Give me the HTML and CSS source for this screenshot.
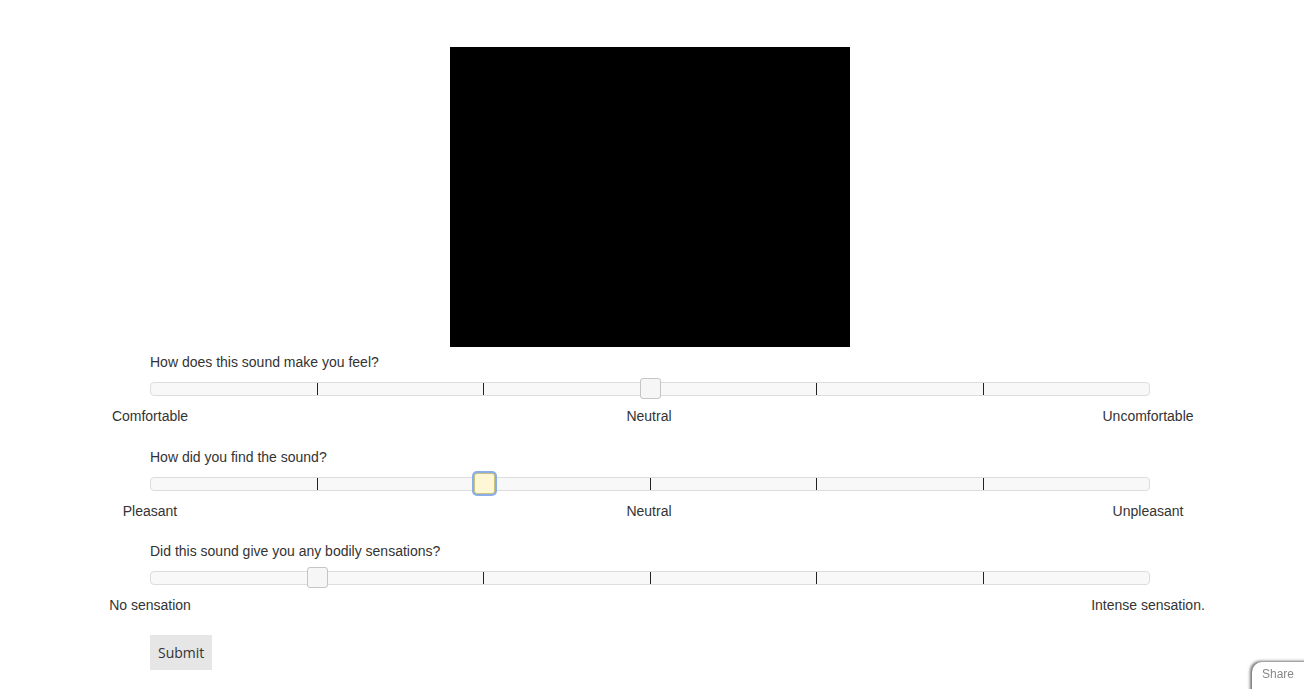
FILE: index.html
```html
<!DOCTYPE html>
<html>
<head>
<meta charset="utf-8">
<link rel="stylesheet" href="styles.css">
</head>
<body>
<div class="wrap">
  <div class="video"></div>

  <div class="q">
    <div class="question">How does this sound make you feel?</div>
    <div class="track">
      <span class="seg"></span><span class="seg"></span><span class="seg"></span><span class="seg"></span><span class="seg"></span><span class="seg"></span>
      <span class="handle" style="left:50%"></span>
    </div>
    <div class="labels">
      <span class="lbl"><span>Comfortable</span></span>
      <span class="lbl"><span>Neutral</span></span>
      <span class="lbl"><span>Uncomfortable</span></span>
    </div>
  </div>

  <div class="q">
    <div class="question">How did you find the sound?</div>
    <div class="track">
      <span class="seg"></span><span class="seg"></span><span class="seg"></span><span class="seg"></span><span class="seg"></span><span class="seg"></span>
      <span class="handle focus" style="left:33.333%"></span>
    </div>
    <div class="labels">
      <span class="lbl"><span>Pleasant</span></span>
      <span class="lbl"><span>Neutral</span></span>
      <span class="lbl"><span>Unpleasant</span></span>
    </div>
  </div>

  <div class="q">
    <div class="question">Did this sound give you any bodily sensations?</div>
    <div class="track">
      <span class="seg"></span><span class="seg"></span><span class="seg"></span><span class="seg"></span><span class="seg"></span><span class="seg"></span>
      <span class="handle" style="left:16.667%"></span>
    </div>
    <div class="labels">
      <span class="lbl"><span>No sensation</span></span>
      <span class="lbl"><span>Intense sensation.</span></span>
    </div>
  </div>

  <button class="submit">Submit</button>
</div>

<div class="share">Share</div>
</body>
</html>
```

FILE: styles.css
```css
html, body {
  margin: 0;
  padding: 0;
  background: #fff;
}

body {
  font-family: "Liberation Sans", Arial, sans-serif;
  font-size: 14px;
  color: #333;
}

.wrap {
  width: 1000px;
  margin-left: 150px;
  padding-top: 47px;
  display: flex;
  flex-direction: column;
}

.video {
  width: 400px;
  height: 300px;
  background: #000;
  align-self: center;
}

.q {
  display: flex;
  flex-direction: column;
  margin-top: 7px;
  margin-bottom: 17.5px;
}

.question {
  line-height: 16px;
  height: 16px;
}

.track {
  position: relative;
  margin-top: 12px;
  height: 12px;
  border: 1px solid #dddddd;
  border-radius: 4px;
  background: #f8f8f8;
  display: flex;
}

.seg {
  flex: 1;
  border-left: 1px solid #222;
}

.seg:first-child {
  border-left: none;
}

.handle {
  position: absolute;
  top: -5px;
  width: 19px;
  height: 19px;
  margin-left: -10px;
  border: 1px solid #c5c5c5;
  border-radius: 3px;
  background: #f6f6f6;
  box-sizing: content-box;
}

.handle.focus {
  background: #fef7d6;
  border-color: #c9c27a;
  box-shadow: 0 0 0 2px #8aaee9;
}

.labels {
  margin-top: 12px;
  width: 998px;
  display: flex;
  justify-content: space-between;
  line-height: 16px;
  height: 16px;
}

.lbl {
  width: 0;
  display: flex;
  justify-content: center;
  white-space: nowrap;
}

.submit {
  align-self: flex-start;
  margin-top: 4px;
  height: 35px;
  padding: 0 8px;
  border: none;
  background: #e6e6e6;
  color: #333;
  font-family: "Open Sans", sans-serif;
  font-size: 14px;
}

.share {
  position: fixed;
  right: -10px;
  bottom: -4px;
  width: 62px;
  height: 31px;
  padding-left: 10px;
  box-sizing: border-box;
  background: #fff;
  border-top-left-radius: 10px;
  box-shadow: -2px -1px 3px rgba(0, 0, 0, 0.55);
  color: #888;
  font-size: 12px;
  line-height: 25px;
}
```
